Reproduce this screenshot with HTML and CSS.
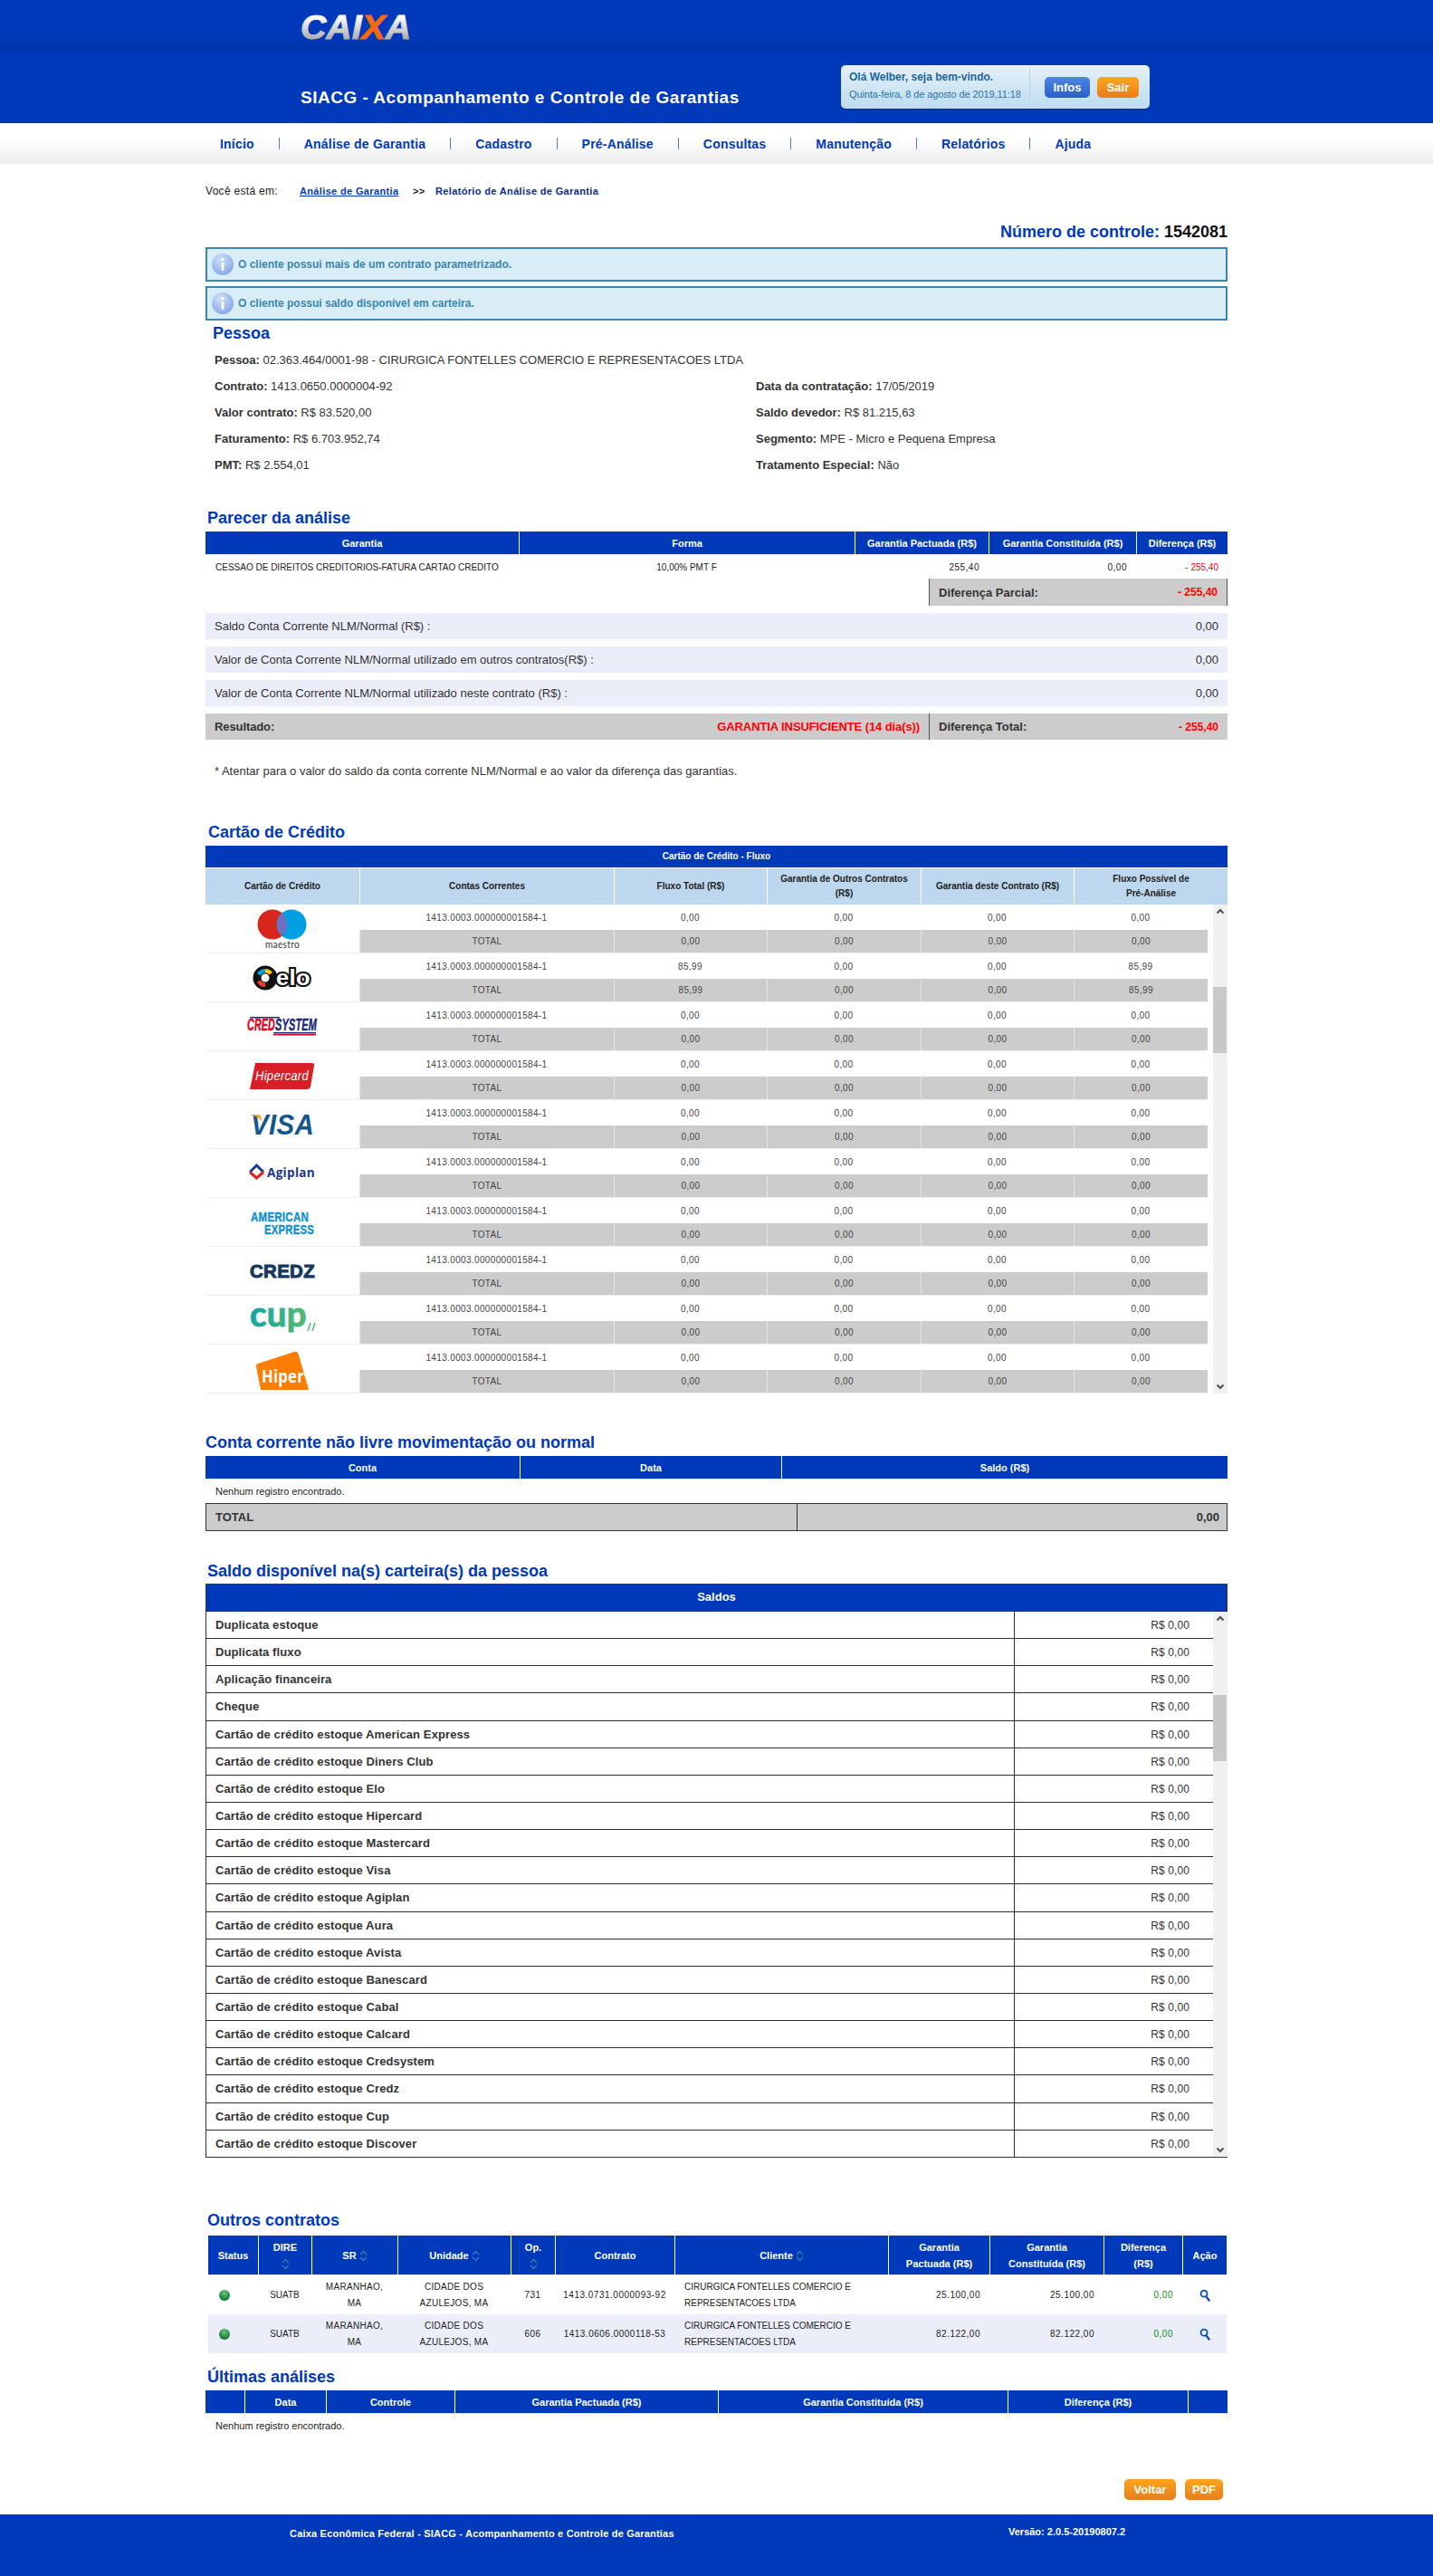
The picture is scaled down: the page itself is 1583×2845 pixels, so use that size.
FILE: index.html
```html
<!DOCTYPE html>
<html>
<head>
    <meta charset="utf-8">
    <title>SIACG - Acompanhamento e Controle de Garantias</title>
    <link rel="stylesheet" href="styles.css">
</head>
<body>
    <div class="top-bar">
        <svg class="logo-caixa" width="124" height="44" viewBox="0 0 124 44">
            <defs>
                <linearGradient id="caixaFill" x1="0" y1="0.2" x2="0" y2="0.8">
                    <stop offset="0" stop-color="#ffffff"/>
                    <stop offset="1" stop-color="#aeaeae"/>
                </linearGradient>
            </defs>
            <text class="caixa-text" x="0" y="33" fill="url(#caixaFill)" stroke="url(#caixaFill)" textLength="122" lengthAdjust="spacingAndGlyphs">CAI<tspan fill="#f26a0f" stroke="#f26a0f">X</tspan>A</text>
        </svg>
    </div>

    <div class="title-bar">
        <div class="app-title">SIACG - Acompanhamento e Controle de Garantias</div>
        <div class="user-box">
            <div class="user-info">
                <div class="user-hello">Olá Welber, seja bem-vindo.</div>
                <div class="user-date">Quinta-feira, 8 de agosto de 2019,11:18</div>
            </div>
            <button class="btn btn-blue">Infos</button>
            <button class="btn btn-orange">Sair</button>
        </div>
    </div>

    <div class="menu">
        <a>Início</a><i></i>
        <a>Análise de Garantia</a><i></i>
        <a>Cadastro</a><i></i>
        <a>Pré-Análise</a><i></i>
        <a>Consultas</a><i></i>
        <a>Manutenção</a><i></i>
        <a>Relatórios</a><i></i>
        <a>Ajuda</a>
    </div>

    <div class="container">
        <div class="breadcrumb">
            <span class="crumb-label">Você está em:</span>
            <a class="crumb-link">Análise de Garantia</a>
            <span class="crumb-sep">&gt;&gt;</span>
            <span class="crumb-now">Relatório de Análise de Garantia</span>
        </div>

        <div class="control-number">Número de controle: <span>1542081</span></div>

        <div class="alert">
            <svg class="info-icon" width="26" height="26" viewBox="0 0 26 26">
                <defs>
                    <radialGradient id="infoFill" cx="0.4" cy="0.3" r="0.8">
                        <stop offset="0" stop-color="#cfe0fa"/>
                        <stop offset="1" stop-color="#7da2e6"/>
                    </radialGradient>
                </defs>
                <circle cx="13" cy="13" r="12" fill="url(#infoFill)"/>
                <circle cx="13" cy="7.5" r="1.8" fill="#fff"/>
                <rect x="11.6" y="11" width="2.8" height="9" rx="1" fill="#fff"/>
            </svg>
            O cliente possui mais de um contrato parametrizado.
        </div>
        <div class="alert alert-second">
            <svg class="info-icon" width="26" height="26" viewBox="0 0 26 26">
                <circle cx="13" cy="13" r="12" fill="url(#infoFill)"/>
                <circle cx="13" cy="7.5" r="1.8" fill="#fff"/>
                <rect x="11.6" y="11" width="2.8" height="9" rx="1" fill="#fff"/>
            </svg>
            O cliente possui saldo disponível em carteira.
        </div>

        <h2 class="section-title pessoa-title">Pessoa</h2>
        <div class="person-line"><b>Pessoa:</b> 02.363.464/0001-98 - CIRURGICA FONTELLES COMERCIO E REPRESENTACOES LTDA</div>
        <div class="person-grid">
            <div class="person-line"><b>Contrato:</b> 1413.0650.0000004-92</div>
            <div class="person-line"><b>Data da contratação:</b> 17/05/2019</div>
            <div class="person-line"><b>Valor contrato:</b> R$ 83.520,00</div>
            <div class="person-line"><b>Saldo devedor:</b> R$ 81.215,63</div>
            <div class="person-line"><b>Faturamento:</b> R$ 6.703.952,74</div>
            <div class="person-line"><b>Segmento:</b> MPE - Micro e Pequena Empresa</div>
            <div class="person-line"><b>PMT:</b> R$ 2.554,01</div>
            <div class="person-line"><b>Tratamento Especial:</b> Não</div>
        </div>

        <h2 class="section-title parecer-title">Parecer da análise</h2>
        <table class="data parecer">
            <colgroup><col class="p1"><col class="p2"><col class="p3"><col class="p4"><col class="p5"></colgroup>
            <tr><th>Garantia</th><th>Forma</th><th>Garantia Pactuada (R$)</th><th>Garantia Constituída (R$)</th><th>Diferença (R$)</th></tr>
            <tr class="parecer-row">
                <td class="left">CESSAO DE DIREITOS CREDITORIOS-FATURA CARTAO CREDITO</td>
                <td>10,00% PMT F</td>
                <td class="right num">255,40</td>
                <td class="right num">0,00</td>
                <td class="right red">- 255,40</td>
            </tr>
        </table>
        <div class="partial-row">
            <div class="sum-box"><span>Diferença Parcial:</span><b class="red">- 255,40</b></div>
        </div>
        <div class="balance-row"><span>Saldo Conta Corrente NLM/Normal (R$) :</span><span>0,00</span></div>
        <div class="balance-row"><span>Valor de Conta Corrente NLM/Normal utilizado em outros contratos(R$) :</span><span>0,00</span></div>
        <div class="balance-row"><span>Valor de Conta Corrente NLM/Normal utilizado neste contrato (R$) :</span><span>0,00</span></div>
        <div class="result-row">
            <div class="result-left"><span>Resultado:</span><b class="red">GARANTIA INSUFICIENTE (14 dia(s))</b></div>
            <div class="sum-box"><span>Diferença Total:</span><b class="red">- 255,40</b></div>
        </div>
        <p class="footnote">* Atentar para o valor do saldo da conta corrente NLM/Normal e ao valor da diferença das garantias.</p>

        <h2 class="section-title cartao-title">Cartão de Crédito</h2>
        <div class="fluxo-head">Cartão de Crédito - Fluxo</div>
        <table class="fluxo-sub">
            <colgroup><col class="f1"><col class="f2"><col class="f3"><col class="f4"><col class="f5"><col class="f6"></colgroup>
            <tr>
                <th>Cartão de Crédito</th><th>Contas Correntes</th><th>Fluxo Total (R$)</th>
                <th>Garantia de Outros Contratos<br>(R$)</th><th>Garantia deste Contrato (R$)</th><th>Fluxo Possível de<br>Pré-Análise</th>
            </tr>
        </table>
        <div class="fluxo-scroll">
            <table class="fluxo-body">
                <colgroup><col class="f1"><col class="f2"><col class="f3"><col class="f4"><col class="f5"><col class="f6b"></colgroup>
                <tr>
                    <td rowspan="2" class="brand">
                        <svg width="56" height="44" viewBox="0 0 56 44">
                            <circle cx="17" cy="17" r="16.5" fill="#d8261c"/>
                            <circle cx="38" cy="17" r="16.5" fill="#009fe3"/>
                            <path d="M27.5 4.500a16.500 16.500 0 0 1 0 25a16.500 16.500 0 0 1 0-25z" fill="#6f71c0"/>
                            <text class="b-maestro" x="28" y="43" text-anchor="middle" textLength="38" lengthAdjust="spacingAndGlyphs">maestro</text>
                        </svg>
                    </td>
                    <td>1413.0003.000000001584-1</td><td>0,00</td><td>0,00</td><td>0,00</td><td>0,00</td>
                </tr>
                <tr class="total"><td>TOTAL</td><td>0,00</td><td>0,00</td><td>0,00</td><td>0,00</td></tr>
                <tr>
                    <td rowspan="2" class="brand">
                        <svg width="66" height="30" viewBox="0 0 66 30">
                            <circle cx="14" cy="15" r="13.5" fill="#111"/>
                            <path d="M14 5a10 10 0 0 0-9 5.5l4 2a5.5 5.5 0 0 1 5-3z" fill="#00a4e0"/>
                            <path d="M5 19.5a10 10 0 0 0 9 5.5v-4.5a5.5 5.5 0 0 1-5-3z" fill="#ef4123"/>
                            <path d="M14 5a10 10 0 0 1 8 4l-3.5 2.5a5.5 5.500 0 0 0-4.500-2z" fill="#ffcb05"/>
                            <circle cx="14" cy="15" r="4.5" fill="#fff"/>
                            <text class="b-elo" x="26" y="23" textLength="38" lengthAdjust="spacingAndGlyphs">elo</text>
                        </svg>
                    </td>
                    <td>1413.0003.000000001584-1</td><td>85,99</td><td>0,00</td><td>0,00</td><td>85,99</td>
                </tr>
                <tr class="total"><td>TOTAL</td><td>85,99</td><td>0,00</td><td>0,00</td><td>85,99</td></tr>
                <tr>
                    <td rowspan="2" class="brand">
                        <svg width="78" height="22" viewBox="0 0 78 22">
                            <rect x="3" y="0" width="33" height="1.5" fill="#1b2a78"/>
                            <text class="b-cred" x="0" y="15" textLength="31" lengthAdjust="spacingAndGlyphs">CRED</text>
                            <text class="b-system" x="31" y="15" textLength="46" lengthAdjust="spacingAndGlyphs">SYSTEM</text>
                            <rect x="29" y="17" width="47" height="1.5" fill="#1b2a78"/>
                            <rect x="29" y="19" width="47" height="1.5" fill="#e2001a"/>
                        </svg>
                    </td>
                    <td>1413.0003.000000001584-1</td><td>0,00</td><td>0,00</td><td>0,00</td><td>0,00</td>
                </tr>
                <tr class="total"><td>TOTAL</td><td>0,00</td><td>0,00</td><td>0,00</td><td>0,00</td></tr>
                <tr>
                    <td rowspan="2" class="brand">
                        <svg width="72" height="30" viewBox="0 0 72 30">
                            <path d="M6 1h62q4 0 3 3l-4 23q-1 3-4 3H0z" fill="#d91f26"/>
                            <text class="b-hipercard" x="6" y="20" textLength="59" lengthAdjust="spacingAndGlyphs">Hipercard</text>
                        </svg>
                    </td>
                    <td>1413.0003.000000001584-1</td><td>0,00</td><td>0,00</td><td>0,00</td><td>0,00</td>
                </tr>
                <tr class="total"><td>TOTAL</td><td>0,00</td><td>0,00</td><td>0,00</td><td>0,00</td></tr>
                <tr>
                    <td rowspan="2" class="brand">
                        <svg width="72" height="24" viewBox="0 0 72 24">
                            <text class="b-visa" x="1" y="23" textLength="70" lengthAdjust="spacingAndGlyphs">VISA</text>
                            <path d="M0 1h9q3 0 3.5 3l1 5Q10 3 0 1z" fill="#f7a823"/>
                        </svg>
                    </td>
                    <td>1413.0003.000000001584-1</td><td>0,00</td><td>0,00</td><td>0,00</td><td>0,00</td>
                </tr>
                <tr class="total"><td>TOTAL</td><td>0,00</td><td>0,00</td><td>0,00</td><td>0,00</td></tr>
                <tr>
                    <td rowspan="2" class="brand">
                        <svg width="74" height="20" viewBox="0 0 74 20">
                            <path d="M1 8.5L8.5 1L16 8.5" fill="none" stroke="#1b3a8c" stroke-width="3"/>
                            <path d="M1 8.5L8.5 15L16 8.5" fill="none" stroke="#e2231a" stroke-width="3"/>
                            <text class="b-agiplan" x="20" y="14" textLength="53" lengthAdjust="spacingAndGlyphs">Agiplan</text>
                        </svg>
                    </td>
                    <td>1413.0003.000000001584-1</td><td>0,00</td><td>0,00</td><td>0,00</td><td>0,00</td>
                </tr>
                <tr class="total"><td>TOTAL</td><td>0,00</td><td>0,00</td><td>0,00</td><td>0,00</td></tr>
                <tr>
                    <td rowspan="2" class="brand">
                        <svg width="72" height="28" viewBox="0 0 72 28">
                            <text class="b-amex" x="1" y="13" textLength="64" lengthAdjust="spacingAndGlyphs">AMERICAN</text>
                            <text class="b-amex" x="16" y="27" textLength="55" lengthAdjust="spacingAndGlyphs">EXPRESS</text>
                        </svg>
                    </td>
                    <td>1413.0003.000000001584-1</td><td>0,00</td><td>0,00</td><td>0,00</td><td>0,00</td>
                </tr>
                <tr class="total"><td>TOTAL</td><td>0,00</td><td>0,00</td><td>0,00</td><td>0,00</td></tr>
                <tr>
                    <td rowspan="2" class="brand">
                        <svg width="74" height="18" viewBox="0 0 74 18">
                            <text class="b-credz" x="1" y="16" textLength="72" lengthAdjust="spacingAndGlyphs">CREDZ</text>
                        </svg>
                    </td>
                    <td>1413.0003.000000001584-1</td><td>0,00</td><td>0,00</td><td>0,00</td><td>0,00</td>
                </tr>
                <tr class="total"><td>TOTAL</td><td>0,00</td><td>0,00</td><td>0,00</td><td>0,00</td></tr>
                <tr>
                    <td rowspan="2" class="brand">
                        <svg width="74" height="28" viewBox="0 0 74 28">
                            <defs>
                                <linearGradient id="cupFill" x1="0" y1="0" x2="1" y2="0">
                                    <stop offset="0" stop-color="#11a7a8"/>
                                    <stop offset="1" stop-color="#58b96c"/>
                                </linearGradient>
                            </defs>
                            <text class="b-cup" x="1" y="21" fill="url(#cupFill)" stroke="url(#cupFill)" textLength="63" lengthAdjust="spacingAndGlyphs">cup</text>
                            <path d="M65 26l3-9M70 26l3-9" stroke="#58b96c" stroke-width="1.5"/>
                        </svg>
                    </td>
                    <td>1413.0003.000000001584-1</td><td>0,00</td><td>0,00</td><td>0,00</td><td>0,00</td>
                </tr>
                <tr class="total"><td>TOTAL</td><td>0,00</td><td>0,00</td><td>0,00</td><td>0,00</td></tr>
                <tr>
                    <td rowspan="2" class="brand">
                        <svg width="60" height="46" viewBox="0 0 60 46">
                            <path d="M1 20q-.5-2 2-3L43 4q3.500-1 4.500 2L59 46H6z" fill="#ff7d00"/>
                            <text class="b-hiper" x="7" y="38" textLength="47" lengthAdjust="spacingAndGlyphs">Hiper</text>
                        </svg>
                    </td>
                    <td>1413.0003.000000001584-1</td><td>0,00</td><td>0,00</td><td>0,00</td><td>0,00</td>
                </tr>
                <tr class="total"><td>TOTAL</td><td>0,00</td><td>0,00</td><td>0,00</td><td>0,00</td></tr>
            </table>
            <div class="scrollbar">
                <svg class="arrow" width="16" height="16" viewBox="0 0 16 16"><path d="M4.5 9.5L8 6l3.5 3.5" fill="none" stroke="#505050" stroke-width="2"/></svg>
                <div class="thumb thumb-fluxo"></div>
                <svg class="arrow arrow-down" width="16" height="16" viewBox="0 0 16 16"><path d="M4.5 6.5L8 10l3.5-3.5" fill="none" stroke="#505050" stroke-width="2"/></svg>
            </div>
        </div>

        <h2 class="section-title conta-title">Conta corrente não livre movimentação ou normal</h2>
        <table class="data conta">
            <colgroup><col class="c1"><col class="c2"><col class="c3"></colgroup>
            <tr><th>Conta</th><th>Data</th><th>Saldo (R$)</th></tr>
            <tr><td colspan="3" class="left empty">Nenhum registro encontrado.</td></tr>
        </table>
        <div class="conta-total"><span>TOTAL</span><span>0,00</span></div>

        <h2 class="section-title saldo-title">Saldo disponível na(s) carteira(s) da pessoa</h2>
        <div class="saldos">
            <div class="saldos-head">Saldos</div>
            <div class="saldos-scroll">
                <div class="saldos-list">
                    <div class="saldo-row"><b>Duplicata estoque</b><span>R$ 0,00</span></div>
                    <div class="saldo-row"><b>Duplicata fluxo</b><span>R$ 0,00</span></div>
                    <div class="saldo-row"><b>Aplicação financeira</b><span>R$ 0,00</span></div>
                    <div class="saldo-row"><b>Cheque</b><span>R$ 0,00</span></div>
                    <div class="saldo-row"><b>Cartão de crédito estoque American Express</b><span>R$ 0,00</span></div>
                    <div class="saldo-row"><b>Cartão de crédito estoque Diners Club</b><span>R$ 0,00</span></div>
                    <div class="saldo-row"><b>Cartão de crédito estoque Elo</b><span>R$ 0,00</span></div>
                    <div class="saldo-row"><b>Cartão de crédito estoque Hipercard</b><span>R$ 0,00</span></div>
                    <div class="saldo-row"><b>Cartão de crédito estoque Mastercard</b><span>R$ 0,00</span></div>
                    <div class="saldo-row"><b>Cartão de crédito estoque Visa</b><span>R$ 0,00</span></div>
                    <div class="saldo-row"><b>Cartão de crédito estoque Agiplan</b><span>R$ 0,00</span></div>
                    <div class="saldo-row"><b>Cartão de crédito estoque Aura</b><span>R$ 0,00</span></div>
                    <div class="saldo-row"><b>Cartão de crédito estoque Avista</b><span>R$ 0,00</span></div>
                    <div class="saldo-row"><b>Cartão de crédito estoque Banescard</b><span>R$ 0,00</span></div>
                    <div class="saldo-row"><b>Cartão de crédito estoque Cabal</b><span>R$ 0,00</span></div>
                    <div class="saldo-row"><b>Cartão de crédito estoque Calcard</b><span>R$ 0,00</span></div>
                    <div class="saldo-row"><b>Cartão de crédito estoque Credsystem</b><span>R$ 0,00</span></div>
                    <div class="saldo-row"><b>Cartão de crédito estoque Credz</b><span>R$ 0,00</span></div>
                    <div class="saldo-row"><b>Cartão de crédito estoque Cup</b><span>R$ 0,00</span></div>
                    <div class="saldo-row"><b>Cartão de crédito estoque Discover</b><span>R$ 0,00</span></div>
                </div>
                <div class="scrollbar">
                    <svg class="arrow" width="16" height="16" viewBox="0 0 16 16"><path d="M4.5 9.5L8 6l3.5 3.5" fill="none" stroke="#505050" stroke-width="2"/></svg>
                    <div class="thumb thumb-saldos"></div>
                    <svg class="arrow arrow-down" width="16" height="16" viewBox="0 0 16 16"><path d="M4.5 6.5L8 10l3.5-3.5" fill="none" stroke="#505050" stroke-width="2"/></svg>
                </div>
            </div>
        </div>

        <h2 class="section-title outros-title">Outros contratos</h2>
        <table class="data outros">
            <colgroup><col class="o1"><col class="o2"><col class="o3"><col class="o4"><col class="o5"><col class="o6"><col class="o7"><col class="o8"><col class="o9"><col class="o10"><col class="o11"></colgroup>
            <tr>
                <th>Status</th>
                <th>DIRE<br><svg class="sort" width="9" height="13" viewBox="0 0 9 13"><path d="M1 5l3.5-3.5L8 5M1 8l3.5 3.5L8 8" fill="none" stroke="#3d86ad" stroke-width="1.2"/></svg></th>
                <th>SR <svg class="sort" width="9" height="13" viewBox="0 0 9 13"><path d="M1 5l3.5-3.5L8 5M1 8l3.5 3.5L8 8" fill="none" stroke="#3d86ad" stroke-width="1.2"/></svg></th>
                <th>Unidade <svg class="sort" width="9" height="13" viewBox="0 0 9 13"><path d="M1 5l3.5-3.5L8 5M1 8l3.5 3.5L8 8" fill="none" stroke="#3d86ad" stroke-width="1.2"/></svg></th>
                <th>Op.<br><svg class="sort" width="9" height="13" viewBox="0 0 9 13"><path d="M1 5l3.5-3.5L8 5M1 8l3.5 3.5L8 8" fill="none" stroke="#3d86ad" stroke-width="1.2"/></svg></th>
                <th>Contrato</th>
                <th>Cliente <svg class="sort" width="9" height="13" viewBox="0 0 9 13"><path d="M1 5l3.5-3.5L8 5M1 8l3.5 3.5L8 8" fill="none" stroke="#3d86ad" stroke-width="1.2"/></svg></th>
                <th>Garantia<br>Pactuada (R$)</th>
                <th>Garantia<br>Constituída (R$)</th>
                <th>Diferença<br>(R$)</th>
                <th>Ação</th>
            </tr>
            <tr class="contract">
                <td><span class="led"></span></td>
                <td>SUATB</td>
                <td class="caps">MARANHAO,<br>MA</td>
                <td class="caps">CIDADE DOS<br>AZULEJOS, MA</td>
                <td class="num">731</td>
                <td class="num cell-tight">1413.0731.0000093-92</td>
                <td class="left">CIRURGICA FONTELLES COMERCIO E<br>REPRESENTACOES LTDA</td>
                <td class="right num">25.100,00</td>
                <td class="right num">25.100,00</td>
                <td class="right num green">0,00</td>
                <td>
                    <svg class="zoom-icon" width="12" height="14" viewBox="0 0 13 15"><circle cx="5.5" cy="5.5" r="3.8" fill="#e8f0fb" stroke="#0f4fb0" stroke-width="2"/><path d="M8 9l3.5 4.5" stroke="#0f4fb0" stroke-width="2.6" stroke-linecap="round"/></svg>
                </td>
            </tr>
            <tr class="contract odd">
                <td><span class="led"></span></td>
                <td>SUATB</td>
                <td class="caps">MARANHAO,<br>MA</td>
                <td class="caps">CIDADE DOS<br>AZULEJOS, MA</td>
                <td class="num">606</td>
                <td class="num cell-tight">1413.0606.0000118-53</td>
                <td class="left">CIRURGICA FONTELLES COMERCIO E<br>REPRESENTACOES LTDA</td>
                <td class="right num">82.122,00</td>
                <td class="right num">82.122,00</td>
                <td class="right num green">0,00</td>
                <td>
                    <svg class="zoom-icon" width="12" height="14" viewBox="0 0 13 15"><circle cx="5.5" cy="5.5" r="3.8" fill="#e8f0fb" stroke="#0f4fb0" stroke-width="2"/><path d="M8 9l3.5 4.5" stroke="#0f4fb0" stroke-width="2.6" stroke-linecap="round"/></svg>
                </td>
            </tr>
        </table>

        <h2 class="section-title ultimas-title">Últimas análises</h2>
        <table class="data ultimas">
            <colgroup><col class="u1"><col class="u2"><col class="u3"><col class="u4"><col class="u5"><col class="u6"><col class="u7"></colgroup>
            <tr><th></th><th>Data</th><th>Controle</th><th>Garantia Pactuada (R$)</th><th>Garantia Constituída (R$)</th><th>Diferença (R$)</th><th></th></tr>
            <tr><td colspan="7" class="left empty">Nenhum registro encontrado.</td></tr>
        </table>

        <div class="actions">
            <button class="btn btn-orange btn-voltar">Voltar</button>
            <button class="btn btn-orange btn-pdf">PDF</button>
        </div>
    </div>

    <div class="footer">
        <div class="footer-left">Caixa Econômica Federal - SIACG - Acompanhamento e Controle de Garantias</div>
        <div class="footer-right">Versão: 2.0.5-20190807.2</div>
    </div>
</body>
</html>
```

FILE: styles.css
```css
* {
    box-sizing: border-box;
}

body {
    margin: 0;
    background-color: #fff;
    color: #333;
    font-family: "Liberation Sans", Arial, sans-serif;
    font-size: 12px;
}

.red { color: #f00; }
.green { color: #0a8a0a; }

/* topo */
.top-bar {
    height: 57px;
    padding: 10px 0 0 332px;
    background: linear-gradient(#0039ba 0, #0039ba 70%, #0033a8 100%);
}

.logo-caixa { display: block; }

.caixa-text {
    font-size: 36px;
    font-weight: bold;
    font-style: italic;
    stroke-width: 1px;
}

.title-bar {
    height: 79px;
    padding: 15px 313px 0 332px;
    display: flex;
    justify-content: space-between;
    align-items: flex-start;
    background-color: #0039ba;
}

.app-title {
    margin-top: 26px;
    color: #fff;
    font-size: 19px;
    font-weight: bold;
    line-height: 20px;
    letter-spacing: .5px;
}

.user-box {
    width: 341px;
    height: 48px;
    padding: 3px 12px 0 9px;
    display: flex;
    align-items: flex-start;
    border-radius: 5px;
    background: linear-gradient(#e6f1f8, #bcdcee);
    box-shadow: 0 1px 1px #0a2a6a;
}

.user-info {
    width: 200px;
    height: 38px;
    margin-right: 16px;
    border-right: 1px solid #b9d6e8;
}

.user-hello {
    margin-top: 3px;
    color: #1c659c;
    font-size: 12px;
    font-weight: bold;
    line-height: 15px;
}

.user-date {
    margin-top: 4px;
    color: #2a73a6;
    font-size: 11px;
    line-height: 14px;
    letter-spacing: -.1px;
}

.btn {
    padding: 0;
    border: none;
    border-radius: 5px;
    color: #fff;
    font-family: "Liberation Sans", Arial, sans-serif;
    font-size: 13px;
    font-weight: bold;
}

.btn-blue {
    width: 50px;
    height: 23px;
    margin: 10px 8px 0 0;
    background: linear-gradient(#4f86e4, #2a5fc4);
}

.btn-orange {
    width: 46px;
    height: 23px;
    margin-top: 10px;
    background: linear-gradient(#fba61f, #e87d1b);
}

/* menu */
.menu {
    height: 45px;
    padding-left: 243px;
    display: flex;
    align-items: center;
    gap: 27px;
    background: linear-gradient(#fff 0, #fff 40%, #ececec 100%);
}

.menu a {
    color: #0039ba;
    font-size: 14px;
    font-weight: bold;
    letter-spacing: .2px;
}

.menu i {
    width: 1px;
    height: 13px;
    background-color: #5a7cc0;
}

.container {
    width: 1129px;
    margin: 0 auto;
}

.breadcrumb {
    height: 37px;
    padding-top: 23px;
    display: flex;
    font-size: 11px;
    line-height: 14px;
    letter-spacing: .35px;
}

.crumb-label { width: 104px; color: #222; font-size: 12px; letter-spacing: .3px; }
.crumb-link { width: 125px; color: #0039ba; font-weight: bold; }
.crumb-link { text-decoration: underline; }
.crumb-sep { width: 25px; color: #222; font-weight: bold; }
.crumb-now { color: #0a2e8a; font-weight: bold; }

.control-number {
    margin-top: 28px;
    color: #0039ba;
    font-size: 18px;
    font-weight: bold;
    line-height: 21px;
    text-align: right;
}

.control-number span { color: #111; }

.alert {
    height: 38px;
    margin-top: 6px;
    padding-left: 34px;
    position: relative;
    border: 2px solid #3a87ad;
    background-color: #d9edf7;
    color: #3a87ad;
    font-size: 12px;
    font-weight: bold;
    line-height: 34px;
}

.alert-second { margin-top: 5px; }

.info-icon {
    position: absolute;
    left: 4px;
    top: 4px;
}

.section-title {
    margin: 0;
    color: #0039ba;
    font-size: 18px;
    font-weight: bold;
    line-height: 20px;
}

.pessoa-title { margin: 4px 0 5px; padding-left: 8px; }
.parecer-title { margin: 34px 0 5px; padding-left: 2px; }
.cartao-title { margin: 49px 0 5px; padding-left: 3px; }
.conta-title { margin: 44px 0 5px; }
.saldo-title { margin: 34px 0 4px; padding-left: 2px; }
.outros-title { margin: 59px 0 7px; padding-left: 2px; }
.ultimas-title { margin: 16px 0 5px; padding-left: 2px; }

.person-line {
    height: 29px;
    padding-left: 10px;
    font-size: 13px;
    line-height: 29px;
}

.person-line b { color: #333; }

.person-grid {
    display: grid;
    grid-template-columns: 598px 531px;
}

/* tabelas */
table {
    width: 100%;
    table-layout: fixed;
    border-collapse: separate;
    border-spacing: 0;
}

.data th {
    height: 26px;
    padding: 0;
    border-left: 1px solid #fff;
    border-bottom: 1px solid #e8e8e8;
    background-color: #0039ba;
    color: #fff;
    font-size: 11px;
    font-weight: bold;
    text-align: center;
}

.data th:first-child { border-left: none; }

.data td {
    padding: 0 10px;
    color: #222;
    font-size: 10px;
    text-align: center;
}

.data td.left { padding-left: 11px; text-align: left; }
.data td.right { text-align: right; }
.data td.red { color: #f00; }
.data td.green { color: #0a8a0a; }
.data td.num { letter-spacing: .5px; }
.data td.caps { letter-spacing: .3px; }
.data td.cell-tight { padding: 0; }
.data td.empty { height: 26px; font-size: 11px; }

.p1 { width: 346px; }
.p2 { width: 371px; }
.p3 { width: 148px; }
.p4 { width: 163px; }
.p5 { width: 101px; }

.parecer-row td { height: 26px; }

.partial-row {
    height: 38px;
    display: flex;
    justify-content: flex-end;
    align-items: flex-start;
}

.sum-box {
    width: 330px;
    height: 30px;
    padding: 0 10px;
    display: flex;
    justify-content: space-between;
    align-items: center;
    border-left: 1px solid #555;
    border-right: 1px solid #555;
    background-color: #ccc;
    font-size: 13px;
    font-weight: bold;
}

.sum-box b { font-size: 12px; }

.balance-row {
    height: 29px;
    margin-bottom: 8px;
    padding: 0 10px;
    display: flex;
    justify-content: space-between;
    align-items: center;
    background-color: #ebeef9;
    font-size: 13px;
}

.result-row {
    height: 29px;
    display: flex;
    background-color: #ccc;
}

.result-row .sum-box { height: 29px; border-right: none; }

.result-left {
    width: 799px;
    padding: 0 10px;
    display: flex;
    justify-content: space-between;
    align-items: center;
    font-size: 13px;
    font-weight: bold;
    letter-spacing: -.1px;
}

.footnote {
    margin: 27px 0 0;
    padding-left: 10px;
    font-size: 13px;
    line-height: 16px;
}

/* cartao de credito */
.fluxo-head {
    height: 25px;
    border-bottom: 1px solid #fff;
    background-color: #0039ba;
    color: #fff;
    font-size: 10px;
    font-weight: bold;
    line-height: 24px;
    text-align: center;
}

.f1 { width: 170px; }
.f2 { width: 281px; }
.f3 { width: 169px; }
.f4 { width: 170px; }
.f5 { width: 169px; }
.f6 { width: 170px; }
.f6b { width: 148px; }

.fluxo-sub th {
    height: 40px;
    padding: 0;
    border-left: 1px solid #fff;
    background-color: #bdd7ee;
    color: #222;
    font-size: 10px;
    font-weight: bold;
    line-height: 16px;
    text-align: center;
}

.fluxo-sub th:first-child { border-left: none; }

.fluxo-scroll {
    height: 540px;
    display: flex;
    justify-content: space-between;
}

.fluxo-body {
    width: 1107px;
    height: 540px;
}

.fluxo-body td {
    height: 28px;
    padding: 0;
    color: #444;
    font-size: 10px;
    letter-spacing: .35px;
    text-align: center;
}

.fluxo-body .total td {
    height: 26px;
    border-left: 1px solid #e6e6e6;
    border-bottom: 1px solid #eceef4;
    background-color: #ccc;
}

.fluxo-body td.brand {
    height: 54px;
    border-bottom: 1px solid #eceef4;
    background-color: #fff;
}

.brand svg {
    display: block;
    margin: 0 auto;
    overflow: visible;
}

.b-maestro { fill: #333; font-family: Lato, sans-serif; font-size: 11px; }
.b-elo { fill: #fff; stroke: #111; stroke-width: 4px; paint-order: stroke; font-size: 23px; font-weight: bold; }
.b-cred { fill: #e2001a; font-size: 18px; font-weight: bold; font-style: italic; stroke: #e2001a; stroke-width: .5px; }
.b-system { fill: #1b2a78; font-size: 18px; font-weight: bold; font-style: italic; stroke: #1b2a78; stroke-width: .5px; }
.b-hipercard { fill: #fff; font-size: 15px; font-style: italic; }
.b-visa { fill: #15568f; font-size: 31px; font-weight: bold; font-style: italic; }
.b-agiplan { fill: #1b3a8c; font-family: "Open Sans", sans-serif; font-size: 15px; font-weight: bold; }
.b-amex { fill: #0f8fd0; stroke: #0f8fd0; stroke-width: .4px; font-size: 14px; font-weight: bold; }
.b-credz { fill: #15395e; stroke: #15395e; stroke-width: 1px; font-size: 20px; font-weight: bold; }
.b-cup { font-family: Lato, sans-serif; font-size: 38px; font-weight: bold; stroke-width: 1px; }
.b-hiper { fill: #fff; font-family: "Open Sans", sans-serif; font-size: 20px; font-weight: bold; }

.scrollbar {
    width: 16px;
    display: flex;
    flex-direction: column;
    background-color: #f0f0f0;
}

.arrow {
    flex: none;
    display: block;
}

.arrow-down { margin-top: auto; }

.thumb {
    width: 15px;
    flex: none;
    background-color: #c8c8c8;
}

.thumb-fluxo { height: 73px; margin-top: 75px; }
.thumb-saldos { height: 73px; margin-top: 76px; }

/* conta corrente */
.c1 { width: 347px; }
.c2 { width: 289px; }
.c3 { width: 493px; }

.conta-total {
    height: 31px;
    padding: 0;
    display: grid;
    grid-template-columns: 652px 477px;
    border: 1px solid #333;
    background-color: #ccc;
    font-size: 13px;
    font-weight: bold;
    line-height: 29px;
}

.conta-total span { padding: 0 10px; }

.conta-total span:last-child {
    border-left: 1px solid #333;
    text-align: right;
}

/* saldos */
.saldos {
    height: 634px;
    border-left: 1px solid #333;
    border-right: 1px solid #333;
    border-bottom: 1px solid #333;
}

.saldos-head {
    height: 31px;
    border-bottom: 1px solid #333;
    background-color: #0039ba;
    color: #fff;
    font-size: 13px;
    font-weight: bold;
    line-height: 30px;
    text-align: center;
}

.saldos-scroll {
    height: 602px;
    display: flex;
}

.saldos-list { width: 1112px; }

.saldo-row {
    height: 30.15px;
    display: grid;
    grid-template-columns: 892px 220px;
    border-bottom: 1px solid #2f2a3a;
    line-height: 30px;
}

.saldo-row:last-child { border-bottom: none; }

.saldo-row b {
    padding-left: 10px;
    font-size: 13px;
    letter-spacing: .1px;
}

.saldo-row span {
    padding-right: 26px;
    border-left: 1px solid #2f2a3a;
    letter-spacing: .1px;
    text-align: right;
}

/* outros contratos */
.outros {
    width: 1125px;
    margin-left: 3px;
}

.o1 { width: 55px; }
.o2 { width: 59px; }
.o3 { width: 95px; }
.o4 { width: 125px; }
.o5 { width: 49px; }
.o6 { width: 132px; }
.o7 { width: 236px; }
.o8 { width: 112px; }
.o9 { width: 126px; }
.o10 { width: 87px; }
.o11 { width: 49px; }

.outros th {
    height: 44px;
    line-height: 18px;
}

.sort { vertical-align: middle; }

.contract td {
    height: 43px;
    line-height: 18px;
}

.contract.odd td { background-color: #ebeef9; }

.led {
    width: 12px;
    height: 12px;
    display: block;
    margin-left: 2px;
    border-radius: 50%;
    background: radial-gradient(circle at 50% 30%, #6fc27f, #0d7a35 75%);
}

.zoom-icon {
    display: block;
    margin: 0 auto;
}

/* ultimas */
.u1 { width: 43px; }
.u2 { width: 90px; }
.u3 { width: 142px; }
.u4 { width: 291px; }
.u5 { width: 320px; }
.u6 { width: 199px; }
.u7 { width: 44px; }

.actions {
    margin-top: 46px;
    padding-right: 5px;
    display: flex;
    justify-content: flex-end;
    gap: 10px;
}

.actions .btn { margin: 0; }

.btn-voltar { width: 57px; }
.btn-pdf { width: 42px; }

/* rodape */
.footer {
    height: 68px;
    margin-top: 16px;
    padding: 0 0 0 320px;
    display: flex;
    background-color: #0039ba;
    color: #fff;
    font-size: 11px;
    font-weight: bold;
}

.footer-left {
    width: 794px;
    margin-top: 14px;
    line-height: 14px;
    letter-spacing: .2px;
}

.footer-right {
    margin-top: 12px;
    line-height: 14px;
}
```
